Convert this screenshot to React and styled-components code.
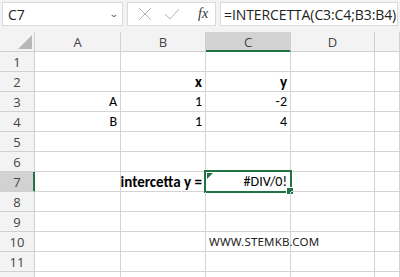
import React from 'react';
import styled, { createGlobalStyle } from 'styled-components';

const GlobalStyle = createGlobalStyle`
  * { box-sizing: border-box; }
  body {
    margin: 0;
    background: #ffffff;
    font-family: 'Open Sans', 'Liberation Sans', sans-serif;
  }
`;

const colors = {
  chrome: '#f3f3f3',
  grid: '#d4d4d4',
  headerLine: '#d0d0d0',
  headerText: '#444444',
  selectedHeader: '#d2d2d2',
  green: '#217346',
  text: '#000000'
};

const Page = styled.div`
  width: 400px;
  height: 277px;
  overflow: hidden;
  background: ${colors.chrome};
`;

const FormulaBar = styled.div`
  display: flex;
  gap: 4px;
  height: 32px;
  padding: 2px 2px 5px 2px;
`;

const Box = styled.div`
  display: flex;
  align-items: center;
  background: #ffffff;
  border: 1px solid #dadada;
  height: 24px;
`;

const NameBox = styled(Box)`
  width: 121px;
  justify-content: space-between;
  padding: 0 4px 0 5px;
  font-size: 14px;
  color: #222;
`;

const Chevron = styled.span`
  font-size: 9px;
  color: #555;
  transform: scaleX(1.3);
  margin-top: -2px;
`;

const ActionBox = styled(Box)`
  width: 89px;
  padding-left: 3px;
`;

const IconSlot = styled.span`
  display: flex;
  align-items: center;
  justify-content: center;
  width: 27px;
`;

const Fx = styled.span`
  font-family: 'Liberation Serif', serif;
  font-style: italic;
  font-size: 14px;
  color: #333;
  margin-left: 13px;
`;

const FormulaInput = styled(Box)`
  flex: 1;
  padding-left: 3px;
  font-size: 14px;
  color: #222;
  letter-spacing: -0.1px;
`;

const Sheet = styled.div`
  display: grid;
  grid-template-columns: 35px 86px 85px 85px 84px 1fr;
  grid-auto-rows: 20px;
  background: #ffffff;
`;

const ColHeader = styled.div`
  position: relative;
  display: flex;
  align-items: center;
  justify-content: center;
  background: ${p => (p.$active ? colors.selectedHeader : colors.chrome)};
  border-right: 1px solid ${colors.headerLine};
  border-bottom: 1px solid ${p => (p.$active ? colors.green : colors.headerLine)};
  box-shadow: ${p => (p.$active ? `inset 0 -1px 0 ${colors.green}` : 'none')};
  font-size: 13px;
  color: ${colors.headerText};
`;

const Corner = styled(ColHeader)`
  &::after {
    content: '';
    position: absolute;
    right: 2px;
    bottom: 2px;
    width: 0;
    height: 0;
    border-left: 14px solid transparent;
    border-bottom: 14px solid #b8b8b8;
  }
`;

const RowHeader = styled.div`
  display: flex;
  align-items: center;
  justify-content: center;
  background: ${p => (p.$active ? colors.selectedHeader : colors.chrome)};
  border-right: 1px solid ${p => (p.$active ? colors.green : colors.headerLine)};
  box-shadow: ${p => (p.$active ? `inset -1px 0 0 ${colors.green}` : 'none')};
  border-bottom: 1px solid ${colors.headerLine};
  font-size: 13px;
  color: ${colors.headerText};
`;

const Cell = styled.div`
  position: relative;
  display: flex;
  align-items: center;
  justify-content: ${p => (p.$align === 'left' ? 'flex-start' : 'flex-end')};
  padding: 0 3px;
  border-right: 1px solid ${colors.grid};
  border-bottom: 1px solid ${colors.grid};
  font-family: 'Carlito', 'Lato', sans-serif;
  font-size: ${p => (p.$bold ? '15px' : '14px')};
  font-weight: ${p => (p.$bold ? 700 : 400)};
  color: ${colors.text};
  white-space: nowrap;
  overflow: visible;
`;

const SelectedCell = styled(Cell)`
  &::before {
    content: '';
    position: absolute;
    left: -2px;
    top: -2px;
    right: -2px;
    bottom: -2px;
    border: 2px solid ${colors.green};
    pointer-events: none;
  }
  &::after {
    content: '';
    position: absolute;
    right: -4px;
    bottom: -4px;
    width: 6px;
    height: 6px;
    background: ${colors.green};
    border: 1px solid #ffffff;
  }
`;

const ErrorFlag = styled.span`
  position: absolute;
  left: 1px;
  top: 1px;
  width: 0;
  height: 0;
  border-top: 6px solid ${colors.green};
  border-right: 6px solid transparent;
`;

const Watermark = styled.span`
  font-family: 'Noto Sans', 'DejaVu Sans', sans-serif;
  font-size: 11.5px;
  letter-spacing: 0.2px;
  color: #222;
`;

const columns = ['A', 'B', 'C', 'D', ''];

const cells = {
  2: { B: { v: 'x', bold: true }, C: { v: 'y', bold: true } },
  3: { A: { v: 'A' }, B: { v: '1' }, C: { v: '-2' } },
  4: { A: { v: 'B' }, B: { v: '1' }, C: { v: '4' } },
  7: { B: { v: 'intercetta y =', bold: true } }
};

const CrossIcon = () => (
  <svg width="14" height="14" viewBox="0 0 14 14">
    <path d="M1 1 L13 13 M13 1 L1 13" stroke="#b5b5b5" strokeWidth="1" fill="none" />
  </svg>
);

const CheckIcon = () => (
  <svg width="16" height="12" viewBox="0 0 16 12">
    <path d="M1 6 L6 11 L15 1" stroke="#b5b5b5" strokeWidth="1" fill="none" />
  </svg>
);

const renderCell = (row, col) => {
  const key = `${row}-${col}`;
  if (row === 7 && col === 'C') {
    return (
      <SelectedCell key={key}>
        <ErrorFlag />
        #DIV/0!
      </SelectedCell>
    );
  }
  if (row === 10 && col === 'C') {
    return (
      <Cell key={key} $align="left">
        <Watermark>WWW.STEMKB.COM</Watermark>
      </Cell>
    );
  }
  const data = cells[row] && cells[row][col];
  return (
    <Cell key={key} $bold={data && data.bold}>
      {data ? data.v : null}
    </Cell>
  );
};

const App = () => {
  const rows = Array.from({ length: 12 }, (_, i) => i + 1);
  return (
    <Page>
      <GlobalStyle />
      <FormulaBar>
        <NameBox>
          C7
          <Chevron>&#8964;</Chevron>
        </NameBox>
        <ActionBox>
          <IconSlot><CrossIcon /></IconSlot>
          <IconSlot><CheckIcon /></IconSlot>
          <Fx>fx</Fx>
        </ActionBox>
        <FormulaInput>=INTERCETTA(C3:C4;B3:B4)</FormulaInput>
      </FormulaBar>
      <Sheet>
        <Corner />
        {columns.map(c => (
          <ColHeader key={c || 'E'} $active={c === 'C'}>{c}</ColHeader>
        ))}
        {rows.map(r => (
          <React.Fragment key={r}>
            <RowHeader $active={r === 7}>{r}</RowHeader>
            {columns.map(c => renderCell(r, c || 'E'))}
          </React.Fragment>
        ))}
      </Sheet>
    </Page>
  );
};

export default App;
